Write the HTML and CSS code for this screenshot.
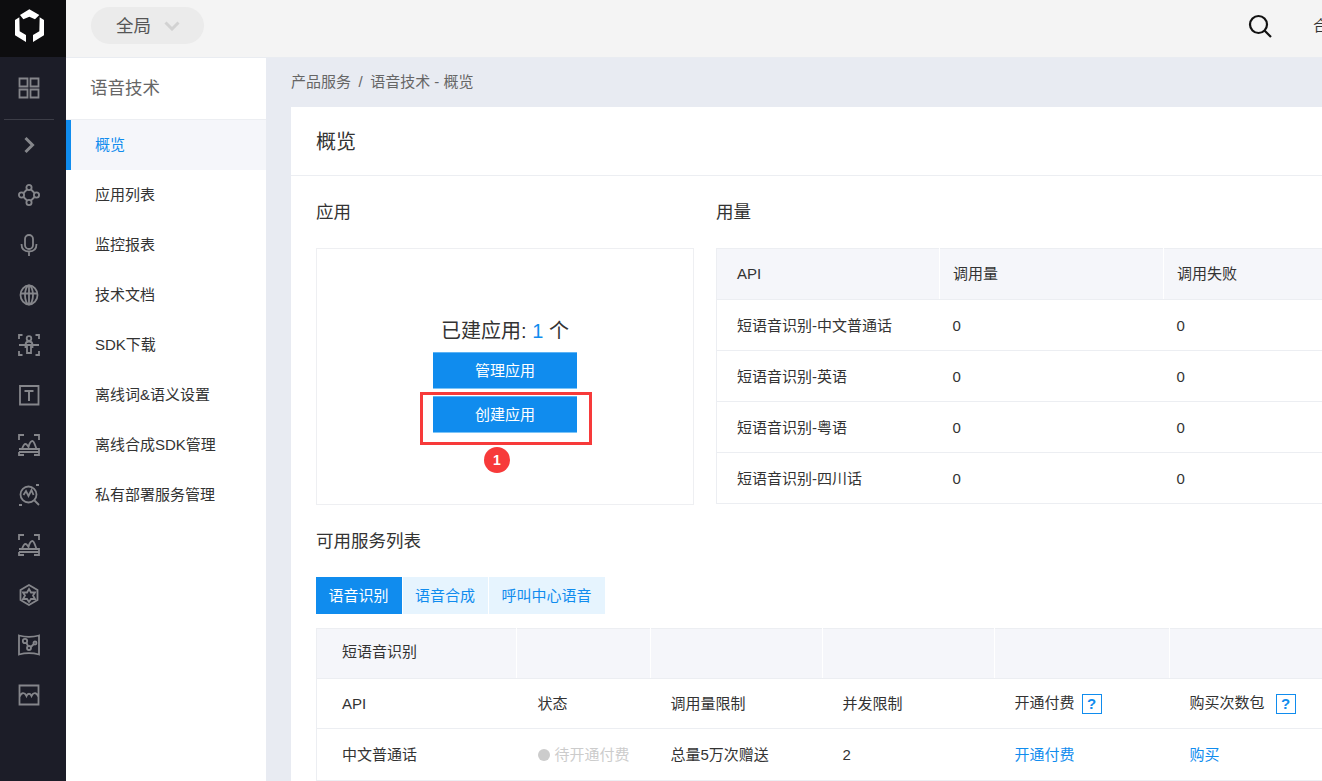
FILE: index.html
```html
<!DOCTYPE html>
<html lang="zh-CN">
<head>
<meta charset="utf-8">
<title>语音技术 - 概览</title>
<link rel="stylesheet" href="styles.css">
</head>
<body>
<div class="app">
  <aside class="rail">
    <div class="logo">
      <svg width="29" height="33" viewBox="0 0 87 99"><path d="M15 18 43 1 73 18 60 31 43 23 25 31Z M0 33 13 25 14 67 33 78 33 99 0 79Z M87 33 74 25 73 67 54 78 54 99 87 79Z" fill="#fff"/></svg>
    </div>
    <div class="rail-item"><svg class="ri" viewBox="0 0 22 22"><path d="M1.500 1.500h8v8h-8zM12.500 1.500h8v8h-8zM1.500 12.500h8v8h-8zM12.500 12.500h8v8h-8z"/></svg></div>
    <div class="rail-sep"></div>
    <div class="rail-item chev"><svg class="ri" viewBox="0 0 22 22"><path class="thick" d="M7.500 4l7 7-7 7"/></svg></div>
    <div class="rail-item"><svg class="ri" viewBox="0 0 22 22"><circle cx="11" cy="3.500" r="2.600"/><circle cx="11" cy="18.500" r="2.600"/><circle cx="3.500" cy="11" r="2.600"/><circle cx="18.500" cy="11" r="2.600"/><path d="M9 5.500l-3.500 3.500M13 5.500l3.500 3.500M5.500 13l3.500 3.500M16.500 13l-3.500 3.500"/></svg></div>
    <div class="rail-item"><svg class="ri" viewBox="0 0 22 22"><rect x="7" y="1" width="8" height="14" rx="4"/><path d="M3.500 10c0 5 3 7.500 7.500 7.500s7.500-2.500 7.500-7.500M11 17.500V22"/></svg></div>
    <div class="rail-item"><svg class="ri" viewBox="0 0 22 22"><ellipse cx="11" cy="11" rx="8.500" ry="9.500"/><ellipse cx="11" cy="11" rx="4" ry="9.500"/><path d="M2.500 9.500h17M11 1.500v19"/></svg></div>
    <div class="rail-item"><svg class="ri" viewBox="0 0 22 22"><path d="M1 5V1h3.500M17.500 1H21v4M1 17v4h3.500M17.500 21H21v-4M1 11h20"/><circle cx="11" cy="4.500" r="2.300"/><path d="M7.500 11c0-2.500 1-3.500 3.500-3.500s3.500 1 3.500 3.500v2H13v6H9v-6H7.500z"/></svg></div>
    <div class="rail-item"><svg class="ri" viewBox="0 0 22 22"><path d="M2 2h18.500v18.500H2z"/><path class="mid" d="M6.500 7h9M11 7v10"/></svg></div>
    <div class="rail-item"><svg class="ri" viewBox="0 0 22 22"><path d="M1 6V1h5M16 1h5v5M1 18v3h5M16 21h5v-3M1 15h20v3H1M4 15c1-3 2-5 3.500-5s2 2 3 3c1-4 2.500-6 4-6s2.500 4 4 8"/></svg></div>
    <div class="rail-item"><svg class="ri" viewBox="0 0 22 22"><circle cx="10.500" cy="10.500" r="8"/><path d="M16.500 16.500l4.500 4.500M5.500 11l2.500-4 2.500 5 3-6 2 5M1 21h3M18 1h3"/></svg></div>
    <div class="rail-item"><svg class="ri" viewBox="0 0 22 22"><path d="M1 6V1h5M16 1h5v5M1 18v3h5M16 21h5v-3M1 15h20v3H1M4 15c1-3 2-5 3.500-5s2 2 3 3c1-4 2.500-6 4-6s2.500 4 4 8"/></svg></div>
    <div class="rail-item"><svg class="ri" viewBox="0 0 22 22"><path d="M11 1l8.500 5v10L11 21l-8.500-5V6z"/><path d="M11 5l2 3.500h4l-2 3 2 3.500h-4l-2 3-2-3H5l2-3.500-2-3h4z"/></svg></div>
    <div class="rail-item"><svg class="ri" viewBox="0 0 22 22"><path d="M1 1.500c7 2 13 2 20 0v19c-7-2-13-2-20 0z"/><circle cx="7" cy="7" r="2.200"/><circle cx="11" cy="14" r="2"/><circle cx="17" cy="9" r="1.500"/><path d="M8.500 9l1.500 3M12.800 13l3-3"/></svg></div>
    <div class="rail-item"><svg class="ri" viewBox="0 0 22 22"><path d="M1.500 1.500h19v19h-19zM1.500 13c2-5 5-5 7-1 1-3 4-3 5 0 2-4 5-4 7 1"/></svg></div>
  </aside>
  <div class="right">
    <header class="topbar">
      <div class="scope"><span>全局</span><svg width="16" height="10" viewBox="0 0 16 10"><path d="M1.500 1.500 8 8l6.500-6.500" fill="none" stroke="#d2d2d2" stroke-width="3"/></svg></div>
      <div class="top-right">
        <svg class="search" width="24" height="24" viewBox="0 0 24 24"><circle cx="10.500" cy="10.500" r="8.500" fill="none" stroke="#111" stroke-width="2.200"/><path d="M16.500 16.500 23 23" stroke="#111" stroke-width="2.200"/></svg>
        <span class="top-link">合作伙伴</span>
      </div>
    </header>
    <div class="body">
      <nav class="subnav">
        <div class="subnav-title">语音技术</div>
        <a class="subnav-item active">概览</a>
        <a class="subnav-item">应用列表</a>
        <a class="subnav-item">监控报表</a>
        <a class="subnav-item">技术文档</a>
        <a class="subnav-item">SDK下载</a>
        <a class="subnav-item">离线词&amp;语义设置</a>
        <a class="subnav-item">离线合成SDK管理</a>
        <a class="subnav-item">私有部署服务管理</a>
      </nav>
      <main class="main">
        <div class="crumbs">产品服务<span class="slash">/</span>语音技术 - 概览</div>
        <section class="card">
          <h1 class="card-title">概览</h1>
          <div class="card-body">
            <div class="overview">
              <div class="col-app">
                <h2 class="sec-title">应用</h2>
                <div class="app-box">
                  <div class="app-count">已建应用: <em>1</em> 个</div>
                  <button class="btn">管理应用</button>
                  <div class="highlight-wrap">
                    <button class="btn">创建应用</button>
                    <div class="red-box"></div>
                    <div class="badge">1</div>
                  </div>
                </div>
              </div>
              <div class="col-usage">
                <h2 class="sec-title">用量</h2>
                <table class="tbl usage">
                  <colgroup><col class="u1"><col class="u2"><col class="u3"><col class="u4"></colgroup>
                  <tr class="head"><th>API</th><th>调用量</th><th>调用失败</th><th></th></tr>
                  <tr><td>短语音识别-中文普通话</td><td>0</td><td>0</td><td></td></tr>
                  <tr><td>短语音识别-英语</td><td>0</td><td>0</td><td></td></tr>
                  <tr><td>短语音识别-粤语</td><td>0</td><td>0</td><td></td></tr>
                  <tr><td>短语音识别-四川话</td><td>0</td><td>0</td><td></td></tr>
                </table>
              </div>
            </div>
            <h2 class="sec-title services">可用服务列表</h2>
            <div class="tabs">
              <a class="tab on">语音识别</a><a class="tab">语音合成</a><a class="tab">呼叫中心语音</a>
            </div>
            <table class="tbl svc">
              <colgroup><col class="s1"><col class="s2"><col class="s3"><col class="s4"><col class="s5"><col class="s6"></colgroup>
              <tr class="head"><th>短语音识别</th><th></th><th></th><th></th><th></th><th></th></tr>
              <tr><td>API</td><td class="status">状态</td><td>调用量限制</td><td>并发限制</td><td>开通付费<span class="q">?</span></td><td>购买次数包<span class="q wide">?</span></td></tr>
              <tr class="last"><td>中文普通话</td><td class="status pending"><i class="dot"></i>待开通付费</td><td>总量5万次赠送</td><td>2</td><td><a class="link">开通付费</a></td><td><a class="link">购买</a></td></tr>
            </table>
          </div>
        </section>
      </main>
    </div>
  </div>
</div>
</body>
</html>
```
FILE: styles.css
```css
* { box-sizing: border-box; }
html, body { margin: 0; height: 100%; overflow: hidden; }
body { font-family: "Liberation Sans", "Noto Sans CJK SC", sans-serif; font-size: 15px; line-height: 20px; color: #333; background: #e8ebf2; }
.app { display: flex; width: 1322px; height: 781px; overflow: hidden; }

.rail { width: 66px; flex: none; background: #1c1d28; display: flex; flex-direction: column; }
.logo { height: 57px; background: #0d0d0f; display: flex; align-items: center; justify-content: center; padding: 0 7px 6px 0; margin-bottom: 6px; }
.rail-item { height: 50px; display: flex; align-items: center; justify-content: center; padding-right: 9px; flex: none; }
.rail-sep { height: 1px; width: 50px; margin: 6px 0 0 4px; background: #3c3d47; flex: none; }
.ri { width: 22px; height: 22px; fill: none; stroke: #85868b; stroke-width: 1.800; }
.ri .thick { stroke-width: 3; }
.ri .mid { stroke-width: 2; }

.right { flex: 1; min-width: 0; display: flex; flex-direction: column; }
.topbar { height: 58px; flex: none; background: #f4f4f4; border-bottom: 1px solid #e9ecf1; display: flex; align-items: center; justify-content: space-between; padding: 0 0 6px 25px; }
.scope { width: 113px; height: 37px; border-radius: 19px; background: #ebebeb; display: flex; align-items: center; gap: 13px; padding-left: 25px; font-size: 17.500px; color: #555; }
.top-right { display: flex; align-items: center; gap: 41px; width: 139px; flex: none; white-space: nowrap; overflow: hidden; }
.top-link { font-size: 15px; color: #333; }
.search { flex: none; margin-left: 65px; }

.body { flex: 1; display: flex; min-height: 0; }
.subnav { width: 200px; flex: none; background: #fff; }
.subnav-title { height: 62px; border-bottom: 1px solid #eceef2; padding-left: 24px; line-height: 60px; font-size: 17.500px; color: #666; }
.subnav-item { display: block; height: 50px; line-height: 50px; padding-left: 29px; color: #333; }
.subnav-item.active { background: #f5f6fa; color: #108cee; border-left: 5px solid #108cee; padding-left: 24px; }

.main { flex: 1; min-width: 0; padding: 0 0 0 25px; }
.crumbs { height: 49px; line-height: 47px; color: #666; }
.slash { margin: 0 7.500px; }
.card { width: 1100px; background: #fff; height: 700px; }
.card-title { margin: 0; height: 69px; line-height: 70px; padding-left: 25px; font-size: 20px; font-weight: 400; color: #333; border-bottom: 1px solid #eceef2; }
.card-body { padding: 0 25px; }
.sec-title { margin: 0; font-size: 17.500px; font-weight: 400; color: #333; height: 72px; line-height: 73px; }
.overview { display: flex; gap: 22px; }
.col-app { width: 378px; flex: none; }
.col-usage { flex: 1; min-width: 0; }
.app-box { height: 257px; border: 1px solid #eeeff2; display: flex; flex-direction: column; align-items: center; padding-top: 69px; }
.app-count { font-size: 20px; line-height: 26px; height: 34px; color: #333; }
.app-count em { font-style: normal; color: #108cee; }
.btn { display: block; width: 144px; height: 37px; border: 0; border-top: 1px solid #5cb3f5; border-bottom: 1px solid #7cc4f7; background: #108cee; color: #fff; font: inherit; padding: 0; }
.highlight-wrap { position: relative; margin-top: 7px; }
.red-box { position: absolute; left: -13px; top: -4px; width: 172px; height: 53px; border: 3px solid #f73a3a; }
.badge { position: absolute; left: 51px; top: 51px; width: 26px; height: 26px; border-radius: 50%; background: #f73a3a; color: #fff; font-size: 14px; font-weight: 700; line-height: 26px; text-align: center; }

.tbl { border-collapse: collapse; table-layout: fixed; }
.tbl th, .tbl td { font-weight: 400; text-align: left; padding: 0 0 0 20px; color: #333; white-space: nowrap; }
.tbl .head th { background: #f5f6fa; border-left: 1px solid #fff; border-bottom: 1px solid #eceef2; }
.tbl .head th:first-child { border-left: 0; }
.tbl td { border-bottom: 1px solid #eceef2; }
.usage { width: 600px; border: 1px solid #eceef2; border-right: 0; }
.usage tr { height: 51px; }
.usage .u1 { width: 223px; }
.usage .u2, .usage .u3 { width: 224px; }
.usage .u4 { width: 200px; }
.usage th:nth-child(n+2), .usage td:nth-child(n+2) { padding-left: 13px; }
.usage td { padding-top: 1px; }

.services { height: 72px; }
.tabs { display: flex; gap: 1px; }
.tab { height: 37px; line-height: 37px; padding: 0 13px 0 12.500px; background: #e6f4fe; color: #108cee; }
.tab.on { background: #108cee; color: #fff; }

.svc { width: 1020px; margin-top: 14px; border: 1px solid #eceef2; border-right: 0; }
.svc tr { height: 50px; }
.svc tr.last { height: 52px; }
.svc .head th { padding-bottom: 3px; }
.svc .s1 { width: 200px; }
.svc .s2 { width: 134px; }
.svc .s3, .svc .s4 { width: 172px; }
.svc .s5 { width: 175px; }
.svc .s6 { width: 170px; }
.svc th:first-child, .svc td:first-child { padding-left: 25px; }
.tbl td.status { padding-left: 21px; }
.q { display: inline-block; width: 20px; height: 20px; line-height: 18px; margin-left: 7px; border: 1px solid #108cee; color: #108cee; text-align: center; font-weight: 700; vertical-align: middle; }
.q.wide { margin-left: 11px; }
.link { color: #108cee; }
.tbl td.pending { color: #ccc; }
.dot { display: inline-block; width: 12px; height: 12px; margin-right: 5px; border-radius: 50%; background: #ccc; vertical-align: -1px; }
```
